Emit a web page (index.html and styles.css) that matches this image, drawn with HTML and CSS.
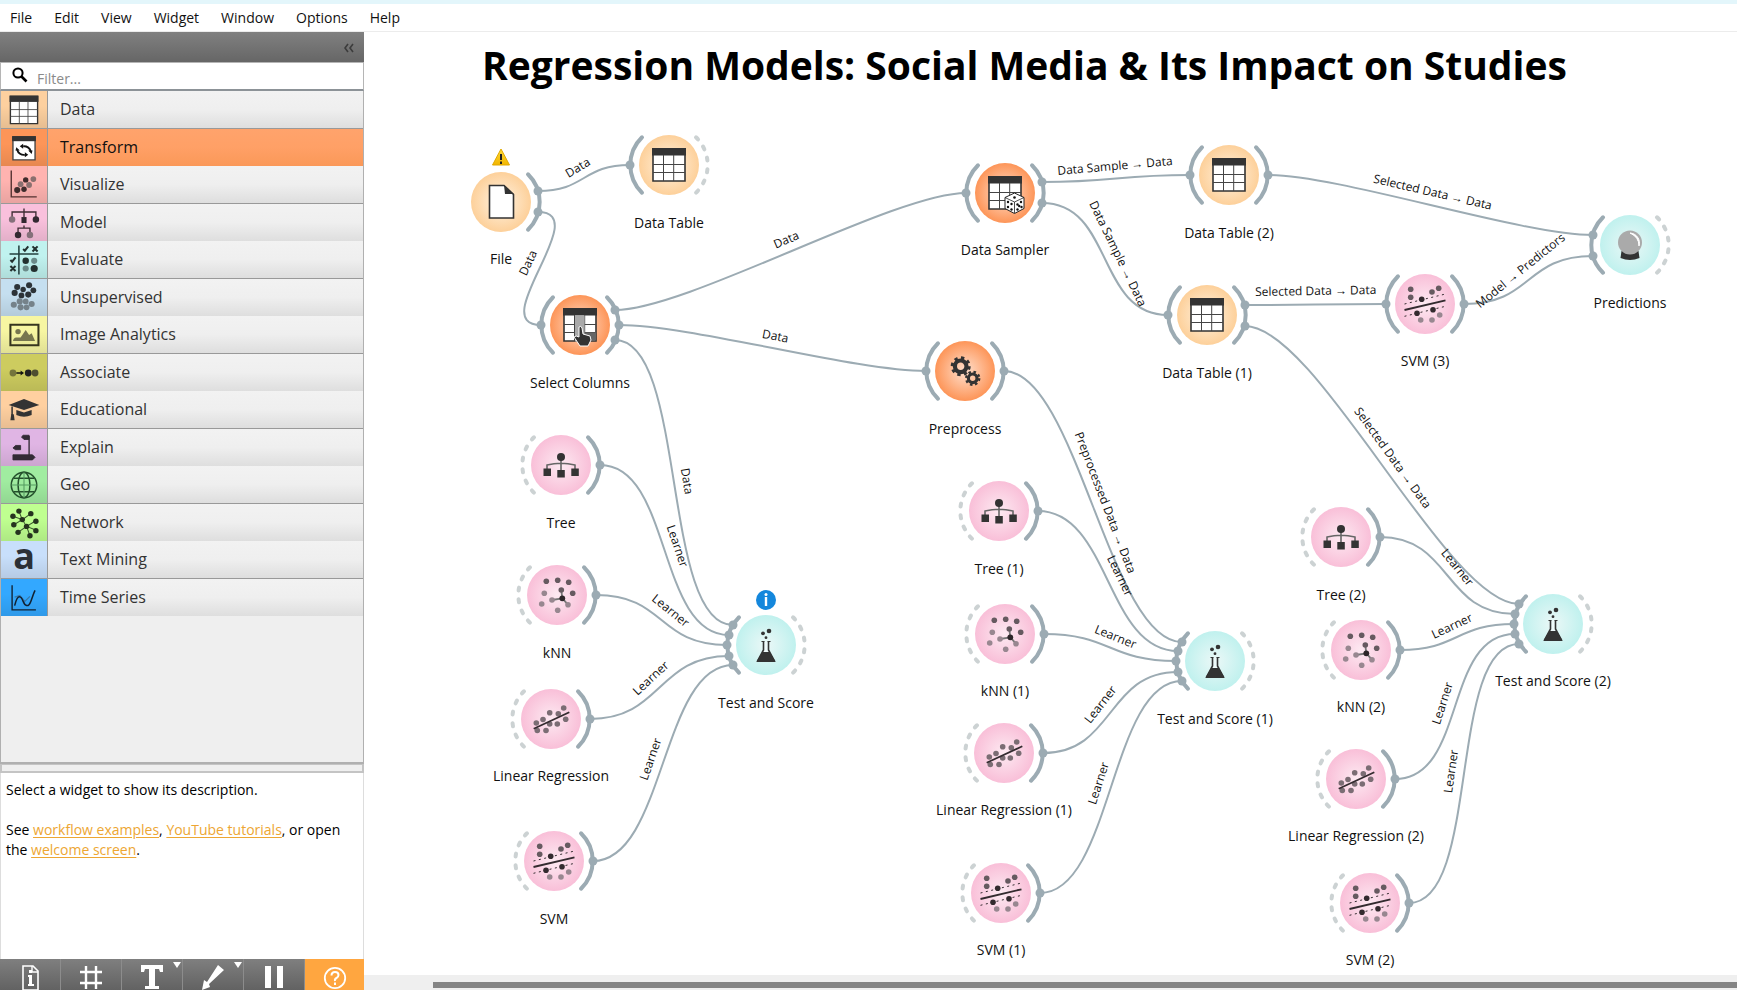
FILE: index.html
```
<!DOCTYPE html>
<html lang="en">
<head>
<meta charset="utf-8">
<title>Regression Models</title>
<link rel="stylesheet" href="styles.css">
</head>
<body>
<div class="app">
  <nav class="menubar">
    <button type="button">File</button><button type="button">Edit</button><button type="button">View</button><button type="button">Widget</button><button type="button">Window</button><button type="button">Options</button><button type="button">Help</button>
  </nav>
  <div class="workspace">
    <aside class="sidebar">
      <div class="dock-head"><button type="button" aria-label="Collapse"><svg width="12" height="10" viewBox="0 0 12 10"><path d="M5 1 2 5l3 4M10 1 7 5l3 4" fill="none" stroke="#3c3c3c" stroke-width="1.6"/></svg></button></div>
      <label class="filter">
        <svg width="16" height="16" viewBox="0 0 16 16" aria-hidden="true"><circle cx="6" cy="6" r="4.6" fill="none" stroke="#000" stroke-width="2"/><path d="M9.5 9.500 14.500 14.500" stroke="#000" stroke-width="2.600"/></svg>
        <input type="text" placeholder="Filter..." aria-label="Filter">
      </label>
      <div class="categories">
        <button type="button" class="cat"><span class="cat-icon c-data"><svg viewBox="-20 -20 40 40"><use href="#i-table"/></svg></span><span>Data</span></button>
        <button type="button" class="cat selected"><span class="cat-icon c-transform"><svg viewBox="-20 -20 40 40"><path d="M-13-13h26v27h-26z" fill="#fff" stroke="#444" stroke-width="1.600"/><path d="M-14-14h28v6h-28z" fill="#333"/><path d="M-8 2a8 8 0 0 0 9 6M8 4a8 8 0 0 0-9-6" fill="none" stroke="#111" stroke-width="2.200"/><path d="M-10 3l1-4 4 4zM10 3l-1 4-4-4zM1 5v6l4-3zM-1-5v6l-4-3z" fill="#111"/></svg></span><span>Transform</span></button>
        <button type="button" class="cat"><span class="cat-icon c-visualize"><svg viewBox="-20 -20 40 40"><path d="M-15-17v31h30" fill="none" stroke="#53302f" stroke-width="1.600"/><g fill="#3f2c2c"><circle cx="-8" cy="6" r="3.600"/><circle cx="0" cy="5" r="3.200"/><circle cx="2" cy="-6" r="3.200"/></g><g fill="#8a706f"><circle cx="-4" cy="-1" r="3.400"/><circle cx="6" cy="0" r="3.400"/><circle cx="11" cy="-7" r="3.400"/></g></svg></span><span>Visualize</span></button>
        <button type="button" class="cat"><span class="cat-icon c-model"><svg viewBox="-20 -20 40 40"><path d="M-14-7v-6h28v6M0-17v10M-7 12V6H7v6M0 3v3" fill="none" stroke="#3f2c34" stroke-width="1.600"/><circle cx="-14" cy="-4" r="3.800" fill="#85707a"/><circle cx="14" cy="-4" r="3.800" fill="#332830"/><path d="M-3-7h6v7h-6z" fill="#332830"/><circle cx="-7" cy="14" r="3.800" fill="#332830"/><circle cx="7" cy="14" r="3.800" fill="#85707a"/></svg></span><span>Model</span></button>
        <button type="button" class="cat"><span class="cat-icon c-evaluate"><svg viewBox="-20 -20 40 40"><path d="M-6-17v34M-17-7h34" fill="none" stroke="#23403f" stroke-width="1.800"/><path d="M-1-13l2 2 4-5M-16 0l2 2 4-5M10-16l6 6M16-16l-6 6M-16 7l6 6M-10 7l-6 6" fill="none" stroke="#23302f" stroke-width="2.400"/><circle cx="2" cy="1" r="3.800" fill="#23302f"/><circle cx="12" cy="1" r="3.600" fill="#6b8a89"/><circle cx="2" cy="10" r="3.600" fill="#6b8a89"/><circle cx="12" cy="10" r="4.200" fill="#23302f"/></svg></span><span>Evaluate</span></button>
        <button type="button" class="cat"><span class="cat-icon c-unsup"><svg viewBox="-20 -20 40 40"><g fill="#2c3338"><circle cx="-8" cy="-13" r="3.600"/><circle cx="6" cy="-15" r="3.600"/><circle cx="-1" cy="-10" r="3.200"/><circle cx="-11" cy="-6" r="3.600"/><circle cx="11" cy="-9" r="3.400"/><circle cx="5" cy="-4" r="3.600"/><circle cx="-3" cy="-3" r="3.400"/></g><g fill="#75828a"><circle cx="-5" cy="4" r="3.600"/><circle cx="2" cy="4" r="3.400"/><circle cx="-12" cy="8" r="3.600"/><circle cx="9" cy="7" r="3.600"/><circle cx="-4" cy="11" r="3.600"/><circle cx="3" cy="11" r="3.400"/></g></svg></span><span>Unsupervised</span></button>
        <button type="button" class="cat"><span class="cat-icon c-image"><svg viewBox="-20 -20 40 40"><path d="M-16-12h33v24h-33z" fill="none" stroke="#36351f" stroke-width="2.400"/><circle cx="-7" cy="-4" r="3.200" fill="#77764f"/><path d="M-13 7q1-5 5-4l4 0 6-9 4 6 3-2 4 9z" fill="#77764f"/></svg></span><span>Image Analytics</span></button>
        <button type="button" class="cat"><span class="cat-icon c-assoc"><svg viewBox="-20 -20 40 40"><circle cx="-13" cy="0" r="4" fill="#75743c"/><path d="M-9 0h6" stroke="#111" stroke-width="1.800"/><path d="M-4-3 0 0-4 3z" fill="#111"/><circle cx="5" cy="0" r="4" fill="#222"/><circle cx="13" cy="0" r="4" fill="#4f4e30"/></svg></span><span>Associate</span></button>
        <button type="button" class="cat"><span class="cat-icon c-edu"><svg viewBox="-20 -20 40 40"><path d="M0-13 18-6 0 0-18-6zM-9 0 0 3 9 0v6q-9 4-18 0z" fill="#333"/><path d="M-14-4v10" stroke="#333" stroke-width="1.800"/><path d="M-15 5h3l1 7h-5z" fill="#333"/></svg></span><span>Educational</span></button>
        <button type="button" class="cat"><span class="cat-icon c-explain"><svg viewBox="-20 -20 40 40"><path d="M-1-15H6v5H0l-3-3zM-13 0l3-3h6v5h-6zM-13 8H10l3 3-3 3h-23z" fill="#332b35" stroke="#332b35"/><path d="M6-14V10" stroke="#332b35" stroke-width="1.600"/></svg></span><span>Explain</span></button>
        <button type="button" class="cat"><span class="cat-icon c-geo"><svg viewBox="-20 -20 40 40"><g fill="none" stroke="#24502c" stroke-width="1.800"><circle r="15"/><ellipse rx="7" ry="15"/><path d="M-12-8h24M-12 8h24"/></g><path d="M-15 0h30M0-15v30" stroke="#549b60" stroke-width="1.200"/></svg></span><span>Geo</span></button>
        <button type="button" class="cat"><span class="cat-icon c-network"><svg viewBox="-20 -20 40 40"><path d="M-6-14-2-4 8-11M-13-8l11 4 5 8 10-6M-12 2l10-6M-7 11 3 4l4 11M3 4l10 4" fill="none" stroke="#37552a" stroke-width="1.200"/><g fill="#26331f"><circle cx="-6" cy="-14" r="3.200"/><circle cx="-13" cy="-8" r="3.200"/><circle cx="8" cy="-11" r="3.200"/><circle cx="-2" cy="-4" r="3.200"/><circle cx="-12" cy="2" r="3.200"/><circle cx="14" cy="-2" r="3.200"/><circle cx="3" cy="4" r="3.200"/><circle cx="-7" cy="11" r="3.200"/><circle cx="14" cy="9" r="3.200"/><circle cx="7" cy="15" r="3.200"/></g></svg></span><span>Network</span></button>
        <button type="button" class="cat"><span class="cat-icon c-text"><span class="letter">a</span></span><span>Text Mining</span></button>
        <button type="button" class="cat"><span class="cat-icon c-time"><svg viewBox="-20 -20 40 40"><path d="M-14-15v29h28" fill="none" stroke="#123" stroke-width="1.600"/><path d="M-11-1l6-2 6 7 6-6" fill="none" stroke="#3877a8" stroke-width="1.400"/><path d="M-11 9c4-16 8-10 10-5s6 8 9 0 3-9 5-13" fill="none" stroke="#123" stroke-width="1.800"/></svg></span><span>Time Series</span></button>
      </div>
      <div class="splitter"></div>
      <section class="help">
        <p>Select a widget to show its description.</p>
        <p>See <a href="#examples">workflow examples</a>, <a href="#tutorials">YouTube tutorials</a>, or open the <a href="#welcome">welcome screen</a>.</p>
      </section>
      <div class="tools">
        <button type="button" aria-label="Info"><svg width="24" height="28" viewBox="0 0 24 28"><path d="M5 4h10l5 5v19H5z" fill="none" stroke="#fff" stroke-width="1.600"/><path d="M14 4v6h6" fill="none" stroke="#fff" stroke-width="1.400"/><path d="M10 13h4v9h2v2h-6v-2h1v-7h-1zM11 8h3v3h-3z" fill="#fff"/></svg></button>
        <button type="button" aria-label="Grid"><svg width="24" height="28" viewBox="0 0 24 28"><path d="M7 4v23M17 4v23M1 10h22M1 21h22" stroke="#fff" stroke-width="2.400"/></svg></button>
        <button type="button" aria-label="Text"><svg width="24" height="28" viewBox="0 0 24 28"><path d="M1 3h22v7h-3l-1-3h-4v17h4v3H5v-3h4V7H5l-1 3H1z" fill="#fff"/></svg><i></i></button>
        <button type="button" aria-label="Arrow"><svg width="24" height="28" viewBox="0 0 24 28"><path d="M17 3l6 5L8 22l1 3-8 3 2-10 3 2z" fill="#fff"/></svg><i></i></button>
        <button type="button" aria-label="Pause"><svg width="24" height="28" viewBox="0 0 24 28"><path d="M3 4h6v22H3zM15 4h6v22h-6z" fill="#fff"/></svg></button>
        <button type="button" class="active" aria-label="Help"><svg width="24" height="28" viewBox="0 0 24 28"><circle cx="12" cy="16" r="10.200" fill="none" stroke="#fff" stroke-width="1.800"/><path d="M8.500 13.500q0-3.500 3.500-3.500t3.500 3q0 2-2 3t-1.500 3M12 20.500v2.500" fill="none" stroke="#fff" stroke-width="2"/></svg></button>
      </div>
    </aside>
    <main class="canvas">
      <h1>Regression Models: Social Media &amp; Its Impact on Studies</h1>
      <svg class="flow" role="img" aria-label="Workflow">
        <defs>
          <radialGradient id="g-data"><stop offset="0" stop-color="#fff3e2"/><stop offset="1" stop-color="#fdd09a"/></radialGradient>
          <radialGradient id="g-tr"><stop offset="0" stop-color="#ffe0ce"/><stop offset="1" stop-color="#fd9558"/></radialGradient>
          <radialGradient id="g-model"><stop offset="0" stop-color="#fdeaf2"/><stop offset="1" stop-color="#f9bfd8"/></radialGradient>
          <radialGradient id="g-eval"><stop offset="0" stop-color="#ebf8f7"/><stop offset="1" stop-color="#c0f1ee"/></radialGradient>
          <linearGradient id="g-warn" x2="0" y2="1"><stop offset="0" stop-color="#ffdc3a"/><stop offset="1" stop-color="#f2b500"/></linearGradient>
          <path id="out" class="arc" d="M27-27.700A38.700 38.700 0 0 1 27 27.700"/>
          <path id="in" class="arc" d="M-27-27.700A38.700 38.700 0 0 0-27 27.700"/>
          <path id="out0" class="arc none" d="M27-27.700A38.700 38.700 0 0 1 27 27.700"/>
          <path id="in0" class="arc none" d="M-27-27.700A38.700 38.700 0 0 0-27 27.700"/>
          <g id="i-table"><path d="M-16-16h32v32h-32z" fill="#fff" stroke="#333" stroke-width="1.600"/><path d="M-17-17h34v7.500h-34z" fill="#333"/><path d="M-16-.500h32M-16 7.500h32M-5.500-10v26M4.700-10v26" stroke="#444" stroke-width="1"/></g>
          <g id="i-file"><path d="M-11.500-16.500H3l9.500 9v23.500h-24z" fill="#fff" stroke="#333" stroke-width="1.600"/><path d="M3-17l10 9H4z" fill="#333"/></g>
          <g id="i-select"><use href="#i-table"/><path d="M-5-9.500h9.500v26h-9.500z" fill="#aaa"/><path d="M5 7.500h11v8H5z" fill="#666"/><path d="M-1 2q2-2 3 1l1 6 7 2 1 4-3 6H0l-6-9q2-2 5 0z" fill="#333" stroke="#fff" stroke-width="1"/></g>
          <g id="i-sampler"><use href="#i-table"/><path d="M9.500 0 19 4.500v11l-9.500 5-9.500-5v-11z" fill="#fff" stroke="#222"/><path d="M0 4.500 9.500 9 19 4.500M9.500 9v11" fill="none" stroke="#222" stroke-width=".8"/><g fill="#111"><circle cx="9.500" cy="4.500" r="1.300"/><circle cx="3" cy="9" r="1.200"/><circle cx="6.500" cy="11" r="1.200"/><circle cx="3" cy="14" r="1.200"/><circle cx="6.500" cy="16.500" r="1.200"/><circle cx="12.500" cy="11.500" r="1.200"/><circle cx="16" cy="9" r="1.200"/><circle cx="14.200" cy="13" r="1.200"/><circle cx="12.500" cy="16.500" r="1.200"/><circle cx="16.500" cy="14" r="1.200"/></g></g>
          <g id="i-gears" fill="none" stroke="#333"><circle cx="-4.300" cy="-4.700" r="5.800" stroke-width="4.200"/><circle cx="-4.300" cy="-4.700" r="8.500" stroke-width="3" stroke-dasharray="3.300 3.376"/><circle cx="7.700" cy="7.300" r="4.300" stroke-width="3.200"/><circle cx="7.700" cy="7.300" r="6.500" stroke-width="2.400" stroke-dasharray="2.500 2.605"/></g>
          <g id="i-tree"><path d="M0-5V6M-14 5V0q14-3.500 28 0v5" fill="none" stroke="#666" stroke-width="1.600"/><circle cy="-8" r="4" fill="#333"/><path d="M-17.500 3.500h7.500v7.500h-7.500zM-3.700 5h7.500v7.500h-7.500zM10.300 3.500h7.500v7.500h-7.500z" fill="#333"/></g>
          <g id="i-knn"><path d="M5.300 3.300 4.300-5M5.300 3.300-5 5M5.300 3.300 11 9.700" stroke="#777" stroke-width="1.800"/><g fill="#665a60"><circle cx="-10.700" cy="-13.700" r="2.800"/><circle cx=".7" cy="-14.700" r="2.800"/><circle cx="11.700" cy="-12.700" r="2.800"/><circle cx="15.700" cy="-1.700" r="2.800"/><circle cx="4.300" cy="-5" r="2.800"/></g><g fill="#988790"><circle cx="-12.700" cy="-1.700" r="2.800"/><circle cx="-5" cy="5" r="2.800"/><circle cx="-15.300" cy="9" r="2.800"/><circle cx="11" cy="9.700" r="2.800"/><circle cx=".7" cy="15.300" r="2.800"/></g><circle cx="5.300" cy="3.300" r="2.900" fill="#2d2629"/></g>
          <g id="i-lr"><g fill="#7b6d74"><circle cx="12.700" cy="-11" r="2.800"/><circle cx="7.300" cy="-5.300" r="2.800"/><circle cx="14.700" cy=".3" r="2.800"/><circle cx="-1.300" cy="-6.300" r="2.800"/><circle cx="-8" cy=".5" r="2.800"/><circle cx="-1.300" cy="5" r="2.800"/><circle cx="6.300" cy="5" r="2.800"/><circle cx="-14.700" cy="4" r="2.800"/><circle cx="-13.700" cy="11.500" r="2.800"/><circle cx="-5" cy="11.500" r="2.800"/></g><path d="M-17.300 9.700 18.300-6.700" stroke="#332b2f" stroke-width="1.800"/></g>
          <g id="i-svm"><g fill="#665a60"><circle cx="-14.300" cy="-14.700" r="2.800"/><circle cx="-14.300" cy="-6.700" r="2.800"/><circle cx="7" cy="-12" r="2.800"/><circle cx="13.700" cy="-15.700" r="2.800"/></g><g fill="#332b2f"><circle cx="-3.300" cy="-4.700" r="2.800"/><circle cx="8" cy="5.700" r="2.800"/><circle cx="-8" cy="9.300" r="2.800"/></g><g fill="#988790"><circle cx="14.700" cy="11" r="2.800"/><circle cx="7" cy="16" r="2.800"/><circle cx="-4.300" cy="16" r="2.800"/></g><path d="M-20.500 6 20.500-3.700" stroke="#332b2f" stroke-width="1.900"/><path d="M-20.500 0 20.500-10M-20.500 12.300 20.500 2.300" stroke="#332b2f" stroke-width="1" stroke-dasharray="2 3.500"/></g>
          <g id="i-flask"><circle cx="-3" cy="-11.700" r="1.900" fill="#333"/><circle cx="3" cy="-14" r="2.300" fill="#333"/><circle cx="0" cy="-7.300" r="1.400" fill="#333"/><path d="M-2.500-3.500V5L-8.300 15.700H8.300L2.500 5v-8.500" fill="#eefafa" stroke="#333" stroke-width="1.600"/><path d="M-3.500 7.500h7L9 16.500H-9z" fill="#333" stroke="#333"/><path d="M-4.500-3.500h3M1.500-3.500h3" stroke="#333" stroke-width="1.200"/></g>
          <g id="i-ball"><path d="M-8.500 6h17l1 7q-9.500 4-19 0z" fill="#333"/><circle cy="-2.500" r="12" fill="#aaa"/><path d="M0-12a10 10 0 0 1 9 13q0-9-9-13z" fill="#fff" stroke="#fff"/></g>
        </defs>
        <!-- everything below uses window coordinates -->
        <g transform="translate(-364 -32)">
          <g class="links">
            <path d="M538 191C586 191 582 165 630 165"/>
            <path d="M538 212C595 212 484 325 541 325"/>
            <path d="M615 310C687 310 894 193 966 193"/>
            <path d="M619 325C691 325 854 371 926 371"/>
            <path d="M615 340C687 340 661 625 733 625"/>
            <path d="M600 465C672 465 657 635 729 635"/>
            <path d="M596 595C666 595 657 645 727 645"/>
            <path d="M590 719C662 719 657 656 729 656"/>
            <path d="M593 861C665 861 661 665 733 665"/>
            <path d="M1042 182C1114 182 1118 175 1190 175"/>
            <path d="M1042 203C1114 203 1096 315 1168 315"/>
            <path d="M1268 175C1340 175 1521 235 1593 235"/>
            <path d="M1245 305C1315 305 1316 304 1386 304"/>
            <path d="M1464 304C1533 304 1524 256 1593 256"/>
            <path d="M1245 326C1317 326 1447 604 1519 604"/>
            <path d="M1004 371C1076 371 1110 642 1182 642"/>
            <path d="M1038 511C1110 511 1106 651 1178 651"/>
            <path d="M1044 634C1111 634 1109 661 1176 661"/>
            <path d="M1043 753C1115 753 1106 672 1178 672"/>
            <path d="M1040 893C1112 893 1110 681 1182 681"/>
            <path d="M1380 537C1452 537 1443 614 1515 614"/>
            <path d="M1400 650C1458 650 1456 624 1514 624"/>
            <path d="M1395 779C1467 779 1443 634 1515 634"/>
            <path d="M1409 903C1481 903 1447 644 1519 644"/>
          </g>
          <g class="ports">
            <circle cx="538" cy="191" r="4.500"/><circle cx="538" cy="212" r="4.500"/><circle cx="630" cy="165" r="4.500"/>
            <circle cx="541" cy="325" r="4.500"/><circle cx="615" cy="310" r="4.500"/><circle cx="619" cy="325" r="4.500"/><circle cx="615" cy="340" r="4.500"/>
            <circle cx="966" cy="193" r="4.500"/><circle cx="926" cy="371" r="4.500"/><circle cx="1004" cy="371" r="4.500"/>
            <circle cx="733" cy="625" r="4.500"/><circle cx="729" cy="635" r="4.500"/><circle cx="727" cy="645" r="4.500"/><circle cx="729" cy="656" r="4.500"/><circle cx="733" cy="665" r="4.500"/>
            <circle cx="600" cy="465" r="4.500"/><circle cx="596" cy="595" r="4.500"/><circle cx="590" cy="719" r="4.500"/><circle cx="593" cy="861" r="4.500"/>
            <circle cx="1042" cy="182" r="4.500"/><circle cx="1042" cy="203" r="4.500"/><circle cx="1190" cy="175" r="4.500"/><circle cx="1168" cy="315" r="4.500"/><circle cx="1268" cy="175" r="4.500"/>
            <circle cx="1593" cy="235" r="4.500"/><circle cx="1593" cy="256" r="4.500"/><circle cx="1245" cy="305" r="4.500"/><circle cx="1245" cy="326" r="4.500"/><circle cx="1386" cy="304" r="4.500"/><circle cx="1464" cy="304" r="4.500"/>
            <circle cx="1182" cy="642" r="4.500"/><circle cx="1178" cy="651" r="4.500"/><circle cx="1176" cy="661" r="4.500"/><circle cx="1178" cy="672" r="4.500"/><circle cx="1182" cy="681" r="4.500"/>
            <circle cx="1038" cy="511" r="4.500"/><circle cx="1044" cy="634" r="4.500"/><circle cx="1043" cy="753" r="4.500"/><circle cx="1040" cy="893" r="4.500"/>
            <circle cx="1519" cy="604" r="4.500"/><circle cx="1515" cy="614" r="4.500"/><circle cx="1514" cy="624" r="4.500"/><circle cx="1515" cy="634" r="4.500"/><circle cx="1519" cy="644" r="4.500"/>
            <circle cx="1380" cy="537" r="4.500"/><circle cx="1400" cy="650" r="4.500"/><circle cx="1395" cy="779" r="4.500"/><circle cx="1409" cy="903" r="4.500"/>
          </g>
          <g class="nodes">
            <g transform="translate(501 202)"><circle r="30" fill="url(#g-data)"/><use href="#out"/><use href="#i-file"/><text y="62">File</text>
              <path d="M0-53 8.500-37h-17z" fill="url(#g-warn)" stroke="#e0a800" stroke-linejoin="round"/><path d="M0-48v6M0-40.500v2.500" stroke="#222" stroke-width="2"/></g>
            <g transform="translate(669 165)"><circle r="30" fill="url(#g-data)"/><use href="#in"/><use href="#out0"/><use href="#i-table"/><text y="63">Data Table</text></g>
            <g transform="translate(580 325)"><circle r="30" fill="url(#g-tr)"/><use href="#in"/><use href="#out"/><use href="#i-select"/><text y="63">Select Columns</text></g>
            <g transform="translate(561 465)"><circle r="30" fill="url(#g-model)"/><use href="#in0"/><use href="#out"/><use href="#i-tree"/><text y="63">Tree</text></g>
            <g transform="translate(557 595)"><circle r="30" fill="url(#g-model)"/><use href="#in0"/><use href="#out"/><use href="#i-knn"/><text y="63">kNN</text></g>
            <g transform="translate(551 719)"><circle r="30" fill="url(#g-model)"/><use href="#in0"/><use href="#out"/><use href="#i-lr"/><text y="62">Linear Regression</text></g>
            <g transform="translate(554 861)"><circle r="30" fill="url(#g-model)"/><use href="#in0"/><use href="#out"/><use href="#i-svm"/><text y="63">SVM</text></g>
            <g transform="translate(766 645)"><circle r="30" fill="url(#g-eval)"/><use href="#in"/><use href="#out0"/><use href="#i-flask"/><text y="63">Test and Score</text>
              <circle cy="-45" r="10" fill="#1487dc"/><path d="M0-48V-39" stroke="#fff" stroke-width="2.400"/><circle cy="-50.500" r="1.500" fill="#fff"/></g>
            <g transform="translate(1005 193)"><circle r="30" fill="url(#g-tr)"/><use href="#in"/><use href="#out"/><use href="#i-sampler"/><text y="62">Data Sampler</text></g>
            <g transform="translate(1229 175)"><circle r="30" fill="url(#g-data)"/><use href="#in"/><use href="#out"/><use href="#i-table"/><text y="63">Data Table (2)</text></g>
            <g transform="translate(1207 315)"><circle r="30" fill="url(#g-data)"/><use href="#in"/><use href="#out"/><use href="#i-table"/><text y="63">Data Table (1)</text></g>
            <g transform="translate(965 371)"><circle r="30" fill="url(#g-tr)"/><use href="#in"/><use href="#out"/><use href="#i-gears"/><text y="63">Preprocess</text></g>
            <g transform="translate(1425 304)"><circle r="30" fill="url(#g-model)"/><use href="#in"/><use href="#out"/><use href="#i-svm"/><text y="62">SVM (3)</text></g>
            <g transform="translate(1630 245)"><circle r="30" fill="url(#g-eval)"/><use href="#in"/><use href="#out0"/><use href="#i-ball"/><text y="63">Predictions</text></g>
            <g transform="translate(999 511)"><circle r="30" fill="url(#g-model)"/><use href="#in0"/><use href="#out"/><use href="#i-tree"/><text y="63">Tree (1)</text></g>
            <g transform="translate(1005 634)"><circle r="30" fill="url(#g-model)"/><use href="#in0"/><use href="#out"/><use href="#i-knn"/><text y="62">kNN (1)</text></g>
            <g transform="translate(1215 661)"><circle r="30" fill="url(#g-eval)"/><use href="#in"/><use href="#out0"/><use href="#i-flask"/><text y="63">Test and Score (1)</text></g>
            <g transform="translate(1004 753)"><circle r="30" fill="url(#g-model)"/><use href="#in0"/><use href="#out"/><use href="#i-lr"/><text y="62">Linear Regression (1)</text></g>
            <g transform="translate(1001 893)"><circle r="30" fill="url(#g-model)"/><use href="#in0"/><use href="#out"/><use href="#i-svm"/><text y="62">SVM (1)</text></g>
            <g transform="translate(1341 537)"><circle r="30" fill="url(#g-model)"/><use href="#in0"/><use href="#out"/><use href="#i-tree"/><text y="63">Tree (2)</text></g>
            <g transform="translate(1361 650)"><circle r="30" fill="url(#g-model)"/><use href="#in0"/><use href="#out"/><use href="#i-knn"/><text y="62">kNN (2)</text></g>
            <g transform="translate(1553 624)"><circle r="30" fill="url(#g-eval)"/><use href="#in"/><use href="#out0"/><use href="#i-flask"/><text y="62">Test and Score (2)</text></g>
            <g transform="translate(1356 779)"><circle r="30" fill="url(#g-model)"/><use href="#in0"/><use href="#out"/><use href="#i-lr"/><text y="62">Linear Regression (2)</text></g>
            <g transform="translate(1370 903)"><circle r="30" fill="url(#g-model)"/><use href="#in0"/><use href="#out"/><use href="#i-svm"/><text y="62">SVM (2)</text></g>
          </g>
          <g class="link-labels">
            <text y="-8" transform="translate(584 178) rotate(-31)">Data</text>
            <text y="-8" transform="translate(539 268) rotate(-65)">Data</text>
            <text y="-8" transform="translate(791 251) rotate(-23)">Data</text>
            <text y="-8" transform="translate(773 348) rotate(11)">Data</text>
            <text y="-8" transform="translate(675 483) rotate(81)">Data</text>
            <text y="-8" transform="translate(666 550) rotate(71)">Learner</text>
            <text y="-8" transform="translate(663 620) rotate(39)">Learner</text>
            <text y="-8" transform="translate(659 687) rotate(-43)">Learner</text>
            <text y="-8" transform="translate(662 763) rotate(-71)">Learner</text>
            <text y="-8" transform="translate(1116 178) rotate(-5)">Data Sample → Data</text>
            <text y="-8" transform="translate(1107 259) rotate(64)">Data Sample → Data</text>
            <text y="-8" transform="translate(1430 204) rotate(13)">Selected Data → Data</text>
            <text y="-8" transform="translate(1316 303) rotate(-1)">Selected Data → Data</text>
            <text y="-8" transform="translate(1528 280) rotate(-39)">Model → Predictors</text>
            <text y="-8" transform="translate(1383 465) rotate(54)">Selected Data → Data</text>
            <text y="-8" transform="translate(1094 507) rotate(69)">Preprocessed Data → Data</text>
            <text y="-8" transform="translate(1109 581) rotate(64)">Learner</text>
            <text y="-8" transform="translate(1111 648) rotate(22)">Learner</text>
            <text y="-8" transform="translate(1110 712) rotate(-52)">Learner</text>
            <text y="-8" transform="translate(1110 787) rotate(-72)">Learner</text>
            <text y="-8" transform="translate(1448 575) rotate(51)">Learner</text>
            <text y="-8" transform="translate(1457 637) rotate(-25)">Learner</text>
            <text y="-8" transform="translate(1454 707) rotate(-72)">Learner</text>
            <text y="-8" transform="translate(1463 773) rotate(-82)">Learner</text>
          </g>
        </g>
      </svg>
      <div class="hscroll"><span></span></div>
    </main>
  </div>
</div>
</body>
</html>
```
FILE: styles.css
```
* { box-sizing: border-box; }
body { margin: 0; font-family: "Open Sans", "Noto Sans", sans-serif; font-size: 14px; color: #111; background: #fff; }
button { font: inherit; color: inherit; border: 0; padding: 0; background: none; }
.app { display: flex; flex-direction: column; height: 100vh; overflow: hidden; border-top: 4px solid #e3f6fb; }
.menubar { display: flex; gap: 22px; height: 28px; padding: 0 10px; align-items: center; border-bottom: 1px solid #ececec; flex: none; }
.workspace { display: flex; flex: 1; min-height: 0; }
.sidebar { width: 364px; flex: none; display: flex; flex-direction: column; background: #efefef; }
.dock-head { height: 30px; flex: none; display: flex; align-items: center; justify-content: flex-end; padding-right: 9px; background: linear-gradient(#808080, #666); }
.filter { height: 29px; flex: none; display: flex; align-items: center; gap: 9px; padding: 0 11px; background: #fff; border: 1px solid #b5b5b5; border-bottom: 2px solid #8c9297; }
.filter svg { margin-bottom: 2px; }
.filter input { flex: 1; border: 0; outline: 0; padding: 4px 0 0; font: inherit; background: none; }
.filter input::placeholder { color: #8a8a8a; }
.categories { flex: 1; display: flex; flex-direction: column; border: 1px solid #b0b0b0; border-width: 0 1px 2px; min-height: 0; }
.cat { display: flex; align-items: stretch; gap: 12px; height: 37px; flex: none; text-align: left; font-size: 16px; line-height: 37px; color: #333; background: linear-gradient(#f2f2f2 0%, #efefef 50%, #dedede 100%); }
.cat:nth-child(odd) { height: 38px; border-bottom: 1px solid #999; }
.cat.selected { background: linear-gradient(#ffa36c 0%, #ffa066 50%, #fa9858 100%); color: #111; }
.cat-icon { width: 47px; display: flex; align-items: center; justify-content: center; border-right: 1px solid #999; background-image: linear-gradient(transparent 40%, rgba(0,0,0,.09)); }
.cat-icon svg { width: 34px; height: 34px; }
.letter { font-size: 36px; font-weight: 700; line-height: 30px; padding-bottom: 8px; color: #2b2f36; }
.c-data { background-color: #fdd09f; }
.c-transform { background-color: #fd9558; }
.c-visualize { background-color: #ffb3b0; }
.c-model { background-color: #f9c0dc; }
.c-evaluate { background-color: #c0f2ef; }
.c-unsup { background-color: #c5dff0; }
.c-image { background-color: #f7f6a2; }
.c-assoc { background-color: #cdcc5f; }
.c-edu { background-color: #ffd0a0; }
.c-explain { background-color: #e0b5e4; }
.c-geo { background-color: #a0eca0; }
.c-network { background-color: #bfff90; }
.c-text { background-color: #c8dffb; }
.c-time { background-color: #33a8ff; }
.splitter { height: 9px; flex: none; border: 2px solid #c4c4c4; border-top-width: 1px; }
.help { height: 186px; flex: none; background: #fff; border: 1px solid #ddd; border-width: 0 1px; padding: 7px 5px; line-height: 20px; color: #000; }
.help p { margin: 0 0 20px; }
.help a { color: #eda632; text-underline-offset: 2px; }
.tools { display: grid; grid-template-columns: repeat(5, 61px) 1fr; height: 31px; flex: none; background: linear-gradient(#7f7f7f, #626262); }
.tools button { position: relative; display: flex; justify-content: center; align-items: center; border-right: 1px solid #8c8c8c; }
.tools svg { margin-top: 2px; }
.tools i { position: absolute; right: 1px; top: 3px; border: 4px solid transparent; border-top: 6px solid #fff; border-bottom: 0; }
.tools .active { background: #ffa640; border: 0; }
.canvas { position: relative; flex: 1; min-width: 0; display: flex; flex-direction: column; overflow: hidden; background: #fff; }
.canvas h1 { margin: 0; padding: 6px 0 0 118px; font-size: 39px; line-height: 54px; font-weight: 700; color: #000; white-space: nowrap; }
.flow { position: absolute; inset: 0; width: 100%; height: 100%; }
.arc { fill: none; stroke: #9cabb3; stroke-width: 4; stroke-linecap: round; }
.arc.none { stroke: #ccd2d3; stroke-dasharray: 3 8.7; }
.links path { fill: none; stroke: #9cabb3; stroke-width: 2; }
.ports { fill: #9cabb3; }
.nodes text, .link-labels text { text-anchor: middle; fill: #111; }
.nodes text { font-size: 14px; }
.link-labels text { font-size: 12px; }
.hscroll { position: relative; margin-top: auto; height: 15px; background: #efefef; padding: 7px 0 0 69px; }
.hscroll span { display: block; height: 6px; background: #858585; }
```
